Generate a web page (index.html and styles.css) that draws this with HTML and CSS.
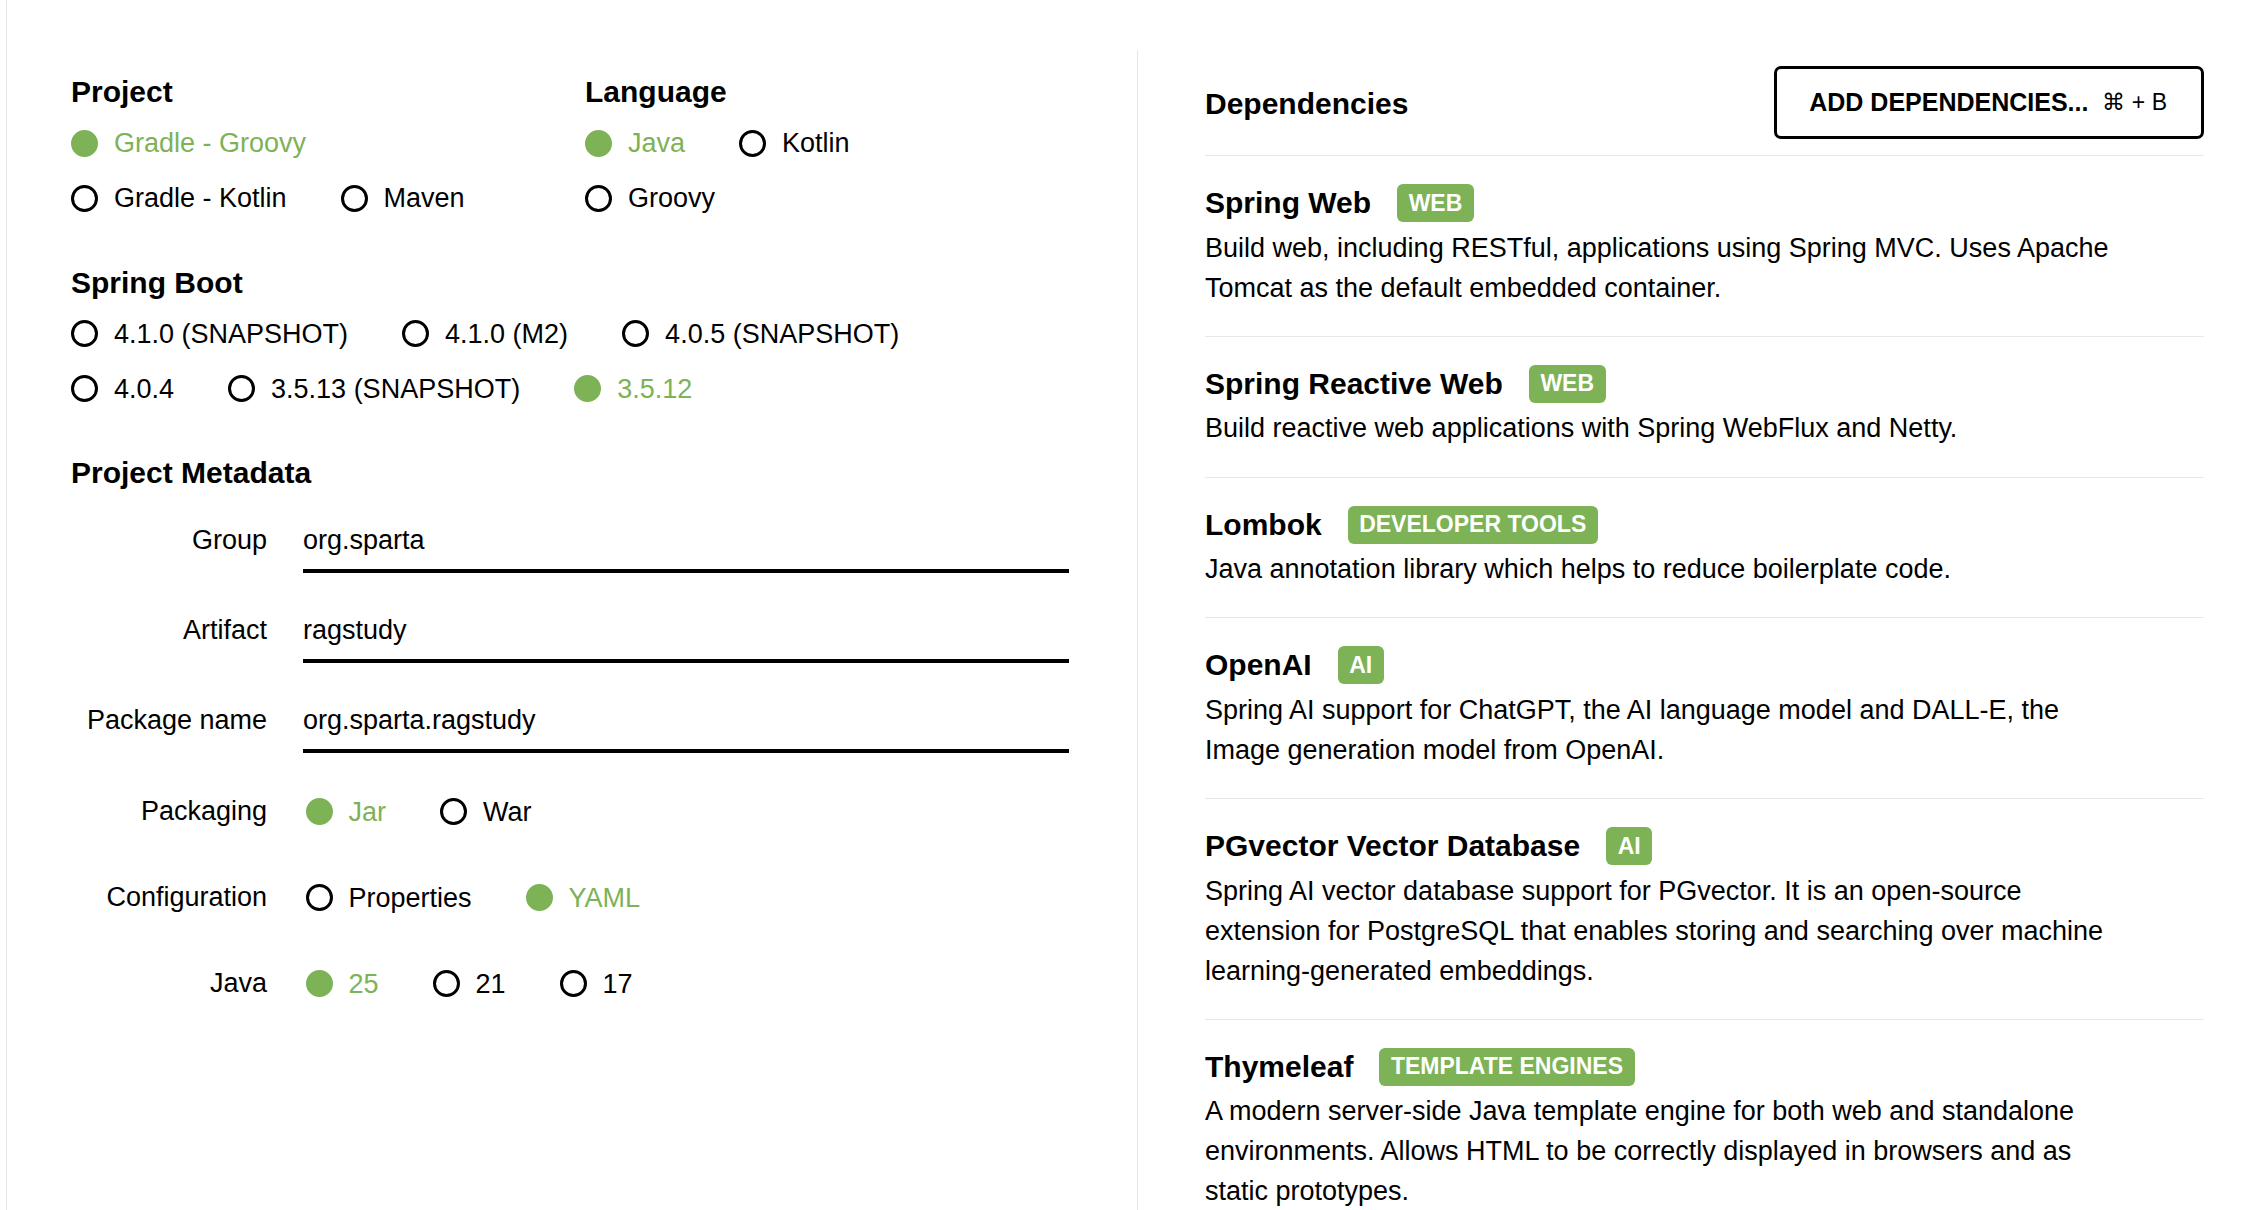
FILE: index.html
```html
<!DOCTYPE html>
<html lang="en">
<head>
<meta charset="utf-8">
<title>Spring Initializr</title>
<link rel="stylesheet" href="styles.css">
</head>
<body>
<div class="page">
  <div class="rail"></div>
  <main class="left">
    <div class="top-grid">
      <section class="section">
        <h2 class="heading">Project</h2>
        <div class="radio-row">
          <label class="radio checked"><span class="dot"></span>Gradle - Groovy</label>
        </div>
        <div class="radio-row">
          <label class="radio"><span class="dot"></span>Gradle - Kotlin</label>
          <label class="radio"><span class="dot"></span>Maven</label>
        </div>
      </section>
      <section class="section">
        <h2 class="heading">Language</h2>
        <div class="radio-row">
          <label class="radio checked"><span class="dot"></span>Java</label>
          <label class="radio"><span class="dot"></span>Kotlin</label>
        </div>
        <div class="radio-row">
          <label class="radio"><span class="dot"></span>Groovy</label>
        </div>
      </section>
    </div>

    <section class="section spaced">
      <h2 class="heading">Spring Boot</h2>
      <div class="radio-row">
        <label class="radio"><span class="dot"></span>4.1.0 (SNAPSHOT)</label>
        <label class="radio"><span class="dot"></span>4.1.0 (M2)</label>
        <label class="radio"><span class="dot"></span>4.0.5 (SNAPSHOT)</label>
      </div>
      <div class="radio-row">
        <label class="radio"><span class="dot"></span>4.0.4</label>
        <label class="radio"><span class="dot"></span>3.5.13 (SNAPSHOT)</label>
        <label class="radio checked"><span class="dot"></span>3.5.12</label>
      </div>
    </section>

    <section class="section spaced">
      <h2 class="heading">Project Metadata</h2>
      <div class="fields">
        <div class="field">
          <div class="field-label">Group</div>
          <div class="field-input">org.sparta</div>
        </div>
        <div class="field">
          <div class="field-label">Artifact</div>
          <div class="field-input">ragstudy</div>
        </div>
        <div class="field">
          <div class="field-label">Package name</div>
          <div class="field-input">org.sparta.ragstudy</div>
        </div>
        <div class="field field-radio first-radio">
          <div class="field-label">Packaging</div>
          <div class="radio-group">
            <label class="radio checked"><span class="dot"></span>Jar</label>
            <label class="radio"><span class="dot"></span>War</label>
          </div>
        </div>
        <div class="field field-radio">
          <div class="field-label">Configuration</div>
          <div class="radio-group">
            <label class="radio"><span class="dot"></span>Properties</label>
            <label class="radio checked"><span class="dot"></span>YAML</label>
          </div>
        </div>
        <div class="field field-radio">
          <div class="field-label">Java</div>
          <div class="radio-group">
            <label class="radio checked"><span class="dot"></span>25</label>
            <label class="radio"><span class="dot"></span>21</label>
            <label class="radio"><span class="dot"></span>17</label>
          </div>
        </div>
      </div>
    </section>
  </main>

  <div class="divider"></div>

  <aside class="right">
    <div class="deps-header">
      <h2 class="heading">Dependencies</h2>
      <button class="add-btn" type="button">ADD DEPENDENCIES...<span class="shortcut">⌘ + B</span></button>
    </div>

    <div class="dep">
      <div class="dep-title"><strong>Spring Web</strong><span class="badge">WEB</span></div>
      <p class="dep-desc">Build web, including RESTful, applications using Spring MVC. Uses Apache Tomcat as the default embedded container.</p>
    </div>
    <div class="dep">
      <div class="dep-title"><strong>Spring Reactive Web</strong><span class="badge">WEB</span></div>
      <p class="dep-desc">Build reactive web applications with Spring WebFlux and Netty.</p>
    </div>
    <div class="dep">
      <div class="dep-title"><strong>Lombok</strong><span class="badge">DEVELOPER TOOLS</span></div>
      <p class="dep-desc">Java annotation library which helps to reduce boilerplate code.</p>
    </div>
    <div class="dep">
      <div class="dep-title"><strong>OpenAI</strong><span class="badge">AI</span></div>
      <p class="dep-desc">Spring AI support for ChatGPT, the AI language model and DALL-E, the Image generation model from OpenAI.</p>
    </div>
    <div class="dep">
      <div class="dep-title"><strong>PGvector Vector Database</strong><span class="badge">AI</span></div>
      <p class="dep-desc">Spring AI vector database support for PGvector. It is an open-source extension for PostgreSQL that enables storing and searching over machine learning-generated embeddings.</p>
    </div>
    <div class="dep">
      <div class="dep-title"><strong>Thymeleaf</strong><span class="badge">TEMPLATE ENGINES</span></div>
      <p class="dep-desc">A modern server-side Java template engine for both web and standalone environments. Allows HTML to be correctly displayed in browsers and as static prototypes.</p>
    </div>
  </aside>
</div>
</body>
</html>
```

FILE: styles.css
```css
html, body {
  margin: 0;
  padding: 0;
  height: 100%;
  overflow: hidden;
  background: #ffffff;
}

body {
  font-family: "Liberation Sans", Arial, sans-serif;
  color: #000000;
  font-size: 27px;
}

.page {
  display: flex;
  height: 100%;
}

.rail {
  width: 6px;
  flex-shrink: 0;
  border-right: 1px solid #e3e9ec;
}

.left {
  width: 1130px;
  flex-shrink: 0;
  box-sizing: border-box;
  padding: 74px 0 0 64px;
}

.divider {
  width: 1px;
  flex-shrink: 0;
  margin-top: 50px;
  background: #e1e7ea;
}

.right {
  flex: 1;
  min-width: 0;
  box-sizing: border-box;
  padding: 66px 62px 0 67px;
}

.heading {
  margin: 0;
  font-size: 30px;
  line-height: 36px;
  font-weight: bold;
}

.section .heading {
  margin-bottom: 5.5px;
}

.top-grid {
  display: grid;
  grid-template-columns: 514px 1fr;
}

.spaced {
  margin-top: 39px;
}

.radio-row {
  display: flex;
  align-items: center;
  height: 55px;
}

.radio {
  display: flex;
  align-items: center;
  margin-right: 54px;
  line-height: 30px;
  white-space: nowrap;
}

.dot {
  width: 27px;
  height: 27px;
  box-sizing: border-box;
  border: 3px solid #000000;
  border-radius: 50%;
  margin-right: 16px;
  flex-shrink: 0;
  background: #ffffff;
}

.radio.checked {
  color: #7db257;
}

.radio.checked .dot {
  background: #7db257;
  border-color: #7db257;
}

/* Metadata */
.fields {
  margin-top: 29px;
}

.field {
  display: flex;
  align-items: flex-start;
  gap: 36px;
  margin-bottom: 37px;
}

.field-label {
  width: 196px;
  flex-shrink: 0;
  text-align: right;
  line-height: 40px;
}

.field-input {
  width: 766px;
  line-height: 40px;
  padding-bottom: 9px;
  border-bottom: 4px solid #000000;
}

.field-radio {
  align-items: center;
  height: 55px;
  margin-bottom: 31px;
}

.first-radio {
  margin-top: -6px;
}

.field-radio .field-label {
  line-height: 55px;
}

.radio-group {
  display: flex;
  align-items: center;
  margin-left: 2.5px;
}

/* Dependencies */
.deps-header {
  display: flex;
  align-items: center;
  justify-content: space-between;
  padding-bottom: 16px;
  border-bottom: 1px solid #e3e9ec;
}

.deps-header .heading {
  padding-top: 2px;
}

.add-btn {
  display: flex;
  align-items: center;
  height: 73px;
  box-sizing: border-box;
  padding: 0 34px 0 32px;
  border: 3px solid #000000;
  border-radius: 7px;
  background: #ffffff;
  color: #000000;
  font-family: "Liberation Sans", Arial, sans-serif;
  font-size: 25px;
  font-weight: bold;
  cursor: pointer;
}

.shortcut {
  margin-left: 14px;
  font-size: 23px;
  font-weight: normal;
}

.dep {
  padding: 28px 0 28.3px;
  border-bottom: 1px solid #e3e9ec;
}

.dep-title {
  display: flex;
  align-items: center;
  height: 38px;
}

.dep-title strong {
  font-size: 30px;
  line-height: 38px;
  font-weight: bold;
}

.badge {
  display: inline-flex;
  align-items: center;
  height: 38px;
  box-sizing: border-box;
  padding: 0 11.5px;
  margin-left: 26px;
  border-radius: 6px;
  background: #7db257;
  color: #ffffff;
  font-size: 23px;
  font-weight: bold;
}

.dep-desc {
  margin: 5.5px 0 0;
  max-width: 925px;
  font-size: 27px;
  line-height: 40px;
}
```
